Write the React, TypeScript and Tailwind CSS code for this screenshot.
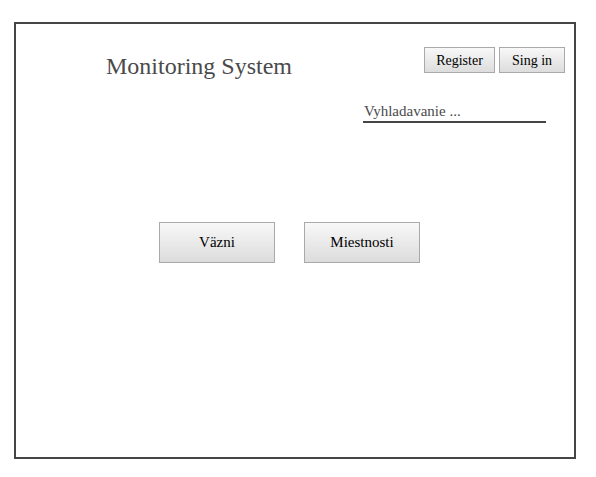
import { ReactNode } from 'react';

function SmallButton({ children, className }: { children: ReactNode; className: string }) {
  return (
    <button
      className={`h-[26px] border border-[#a9a9a9] bg-gradient-to-b from-[#f8f8f8] to-[#dddddd] text-[14px] leading-none text-black ${className}`}
    >
      {children}
    </button>
  );
}

function BigButton({ children }: { children: ReactNode }) {
  return (
    <button className="w-[116px] h-[41px] border border-[#a9a9a9] bg-gradient-to-b from-[#f8f8f8] to-[#dcdcdc] text-[15px] leading-none text-black">
      {children}
    </button>
  );
}

export default function App() {
  return (
    <div className="font-[family-name:Liberation_Serif,serif] w-[596px] h-[477px] bg-white pt-[22px] pl-[14px]">
      <div className="w-[562px] h-[437px] border-2 border-[#454545] flex flex-col">
        {/* header */}
        <div className="flex justify-between items-start">
          <h1 className="ml-[90px] mt-[28px] text-[24px] leading-[28px] text-[#4a4a4a] font-normal">
            Monitoring System
          </h1>
          <div className="flex flex-col items-end mt-[23px] mr-[9px]">
            <div className="flex gap-[4px]">
              <SmallButton className="w-[71px] pt-[1px]">Register</SmallButton>
              <SmallButton className="w-[66px] pt-[1px]">Sing in</SmallButton>
            </div>
            <div className="mt-[29px] mr-[19px] w-[183px] border-b-2 border-[#454545] pl-[1px] text-[15px] leading-[19px] text-[#4a4a4a]">
              Vyhladavanie ...
            </div>
          </div>
        </div>

        {/* main navigation */}
        <div className="flex gap-[29px] ml-[143px] mt-[99px]">
          <BigButton>Väzni</BigButton>
          <BigButton>Miestnosti</BigButton>
        </div>
      </div>
    </div>
  );
}
